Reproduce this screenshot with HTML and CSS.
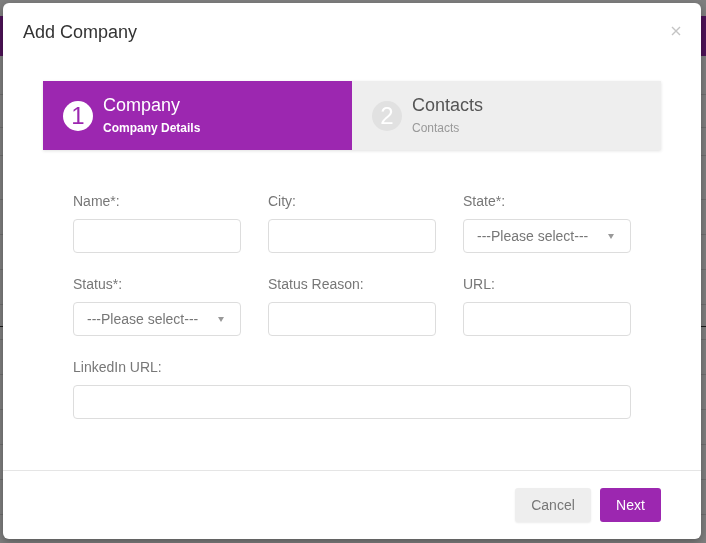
FILE: index.html
```html
<!DOCTYPE html>
<html lang="en">
<head>
<meta charset="utf-8">
<title>Add Company</title>
<link rel="stylesheet" href="styles.css">
</head>
<body>
<div class="page">
  <div class="navbar"></div>
  <div class="table">
    <div class="row r1"></div>
    <div class="row r2"></div>
    <div class="row r3"></div>
    <div class="row r4"></div>
    <div class="row"></div>
    <div class="row"></div>
    <div class="row"></div>
    <div class="row dark"></div>
    <div class="row r5"></div>
    <div class="row"></div>
    <div class="row"></div>
    <div class="row"></div>
    <div class="row"></div>
    <div class="row"></div>
  </div>
</div>
<div class="backdrop"></div>
<div class="modal">
  <div class="modal-header">
    <h4 class="modal-title">Add Company</h4>
    <button class="close" type="button" aria-label="Close">
      <svg width="10" height="10" viewBox="0 0 10 10"><path d="M1 1L9 9M9 1L1 9" stroke="#c4c4c4" stroke-width="1.4" fill="none"/></svg>
    </button>
  </div>
  <div class="modal-body">
    <div class="wizard">
      <div class="step active">
        <span class="num">1</span>
        <div class="step-text">
          <div class="step-title">Company</div>
          <div class="step-sub">Company Details</div>
        </div>
      </div>
      <div class="step">
        <span class="num">2</span>
        <div class="step-text">
          <div class="step-title">Contacts</div>
          <div class="step-sub">Contacts</div>
        </div>
      </div>
    </div>
    <form class="form-grid">
      <div class="field">
        <label class="label">Name*:</label>
        <div class="input"></div>
      </div>
      <div class="field">
        <label class="label">City:</label>
        <div class="input"></div>
      </div>
      <div class="field">
        <label class="label">State*:</label>
        <div class="input select"><span>---Please select---</span><span class="caret"></span></div>
      </div>
      <div class="field">
        <label class="label">Status*:</label>
        <div class="input select"><span>---Please select---</span><span class="caret"></span></div>
      </div>
      <div class="field">
        <label class="label">Status Reason:</label>
        <div class="input"></div>
      </div>
      <div class="field">
        <label class="label">URL:</label>
        <div class="input"></div>
      </div>
      <div class="field wide">
        <label class="label">LinkedIn URL:</label>
        <div class="input"></div>
      </div>
    </form>
  </div>
  <div class="modal-footer">
    <button class="btn btn-cancel" type="button">Cancel</button>
    <button class="btn btn-next" type="button">Next</button>
  </div>
</div>
</body>
</html>
```
FILE: styles.css
```css
* { box-sizing: border-box; }
html, body { margin: 0; padding: 0; }
body {
  font-family: "Liberation Sans", Arial, sans-serif;
  font-size: 14px;
  color: #333;
  background: #fff;
  width: 706px;
  height: 543px;
  overflow: hidden;
}
.page { padding-top: 16px; }
.navbar { height: 40px; background: #9c27b0; }
.table { display: flex; flex-direction: column; }
.row { height: 35px; border-bottom: 1px solid #dedede; }
.row.r1 { height: 39px; }
.row.r2 { height: 33px; }
.row.r3 { height: 28px; }
.row.r4 { height: 44px; }
.row.dark { height: 22px; border-bottom-color: #333; }
.row.r5 { height: 13px; }
.backdrop {
  position: fixed;
  inset: 0;
  background: rgba(0, 0, 0, 0.5);
}
.modal {
  position: absolute;
  left: 3px;
  top: 3px;
  width: 698px;
  height: 536px;
  background: #fff;
  border-radius: 6px;
  box-shadow: 0 3px 9px rgba(0, 0, 0, 0.3);
  display: flex;
  flex-direction: column;
}
.modal-header {
  padding: 19px 20px 16px;
  display: flex;
  justify-content: space-between;
  align-items: flex-start;
}
.modal-title {
  margin: 0;
  font-size: 18px;
  line-height: 20px;
  font-weight: normal;
  color: #333;
}
.close {
  border: 0;
  background: none;
  padding: 0;
  margin: 4px 0 0 0;
  width: 10px;
  height: 10px;
  display: flex;
}
.modal-body { padding: 23px 40px 51px; }
.wizard {
  display: flex;
  height: 69px;
  box-shadow: 0 1px 3px rgba(0, 0, 0, 0.12);
}
.step {
  flex: 1;
  display: flex;
  align-items: center;
  gap: 10px;
  padding-left: 20px;
  background: #eeeeee;
}
.step.active { background: #9c27b0; }
.num {
  width: 30px;
  height: 30px;
  border-radius: 50%;
  background: #e1e1e1;
  color: #fff;
  font-size: 24px;
  line-height: 30px;
  text-align: center;
}
.step.active .num { background: #fff; color: #9c27b0; }
.step-title {
  font-size: 18px;
  line-height: 20px;
  color: #555;
}
.step-sub {
  margin-top: 5px;
  font-size: 12px;
  line-height: 16px;
  color: #999;
}
.step.active .step-title { color: #fff; }
.step.active .step-sub { color: #fff; font-weight: bold; }
.form-grid {
  margin: 0;
  padding: 41px 30px 0;
  display: grid;
  grid-template-columns: repeat(3, 168px);
  column-gap: 27px;
  row-gap: 21px;
}
.field { display: flex; flex-direction: column; }
.field.wide { grid-column: 1 / -1; }
.label {
  font-size: 14px;
  line-height: 20px;
  color: #777;
  margin-bottom: 8px;
}
.input {
  height: 34px;
  border: 1px solid #dddddd;
  border-radius: 4px;
  background: #fff;
}
.select {
  display: flex;
  align-items: center;
  justify-content: space-between;
  padding: 0 16px 0 13px;
  color: #777;
  font-size: 14px;
}
.caret {
  width: 0;
  height: 0;
  border-left: 3px solid transparent;
  border-right: 3px solid transparent;
  border-top: 5px solid #999;
}
.modal-footer {
  border-top: 1px solid #e5e5e5;
  padding: 17px 40px 17px;
  display: flex;
  justify-content: flex-end;
  gap: 9px;
}
.btn {
  height: 34px;
  border: 0;
  border-radius: 3px;
  font-family: "Liberation Sans", Arial, sans-serif;
  font-size: 14px;
  padding: 0 16px;
}
.btn-cancel {
  width: 76px;
  background: #eeeeee;
  color: #777;
  box-shadow: 0 1px 2px rgba(0, 0, 0, 0.08);
}
.btn-next {
  width: 61px;
  background: #9c27b0;
  color: #fff;
}
```
